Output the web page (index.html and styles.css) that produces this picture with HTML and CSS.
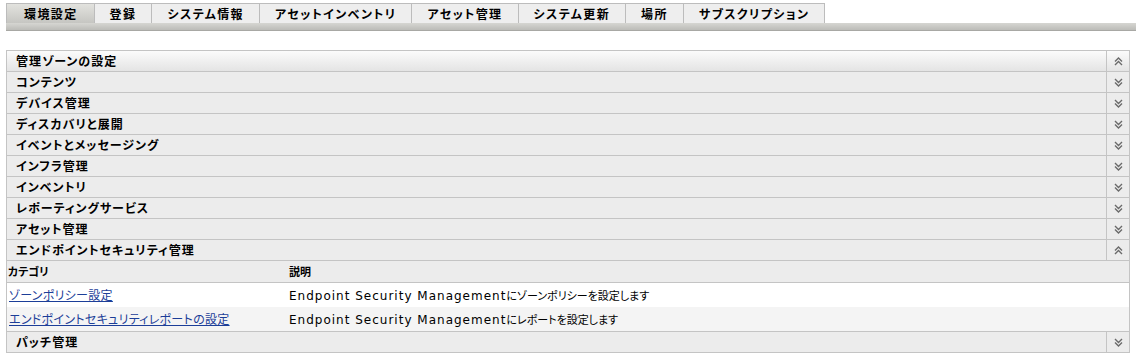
FILE: index.html
```html
<!DOCTYPE html>
<html lang="ja">
<head>
    <meta charset="UTF-8">
    <title>環境設定</title>
    <link rel="stylesheet" href="styles.css">
</head>
<body>

    <div class="tabs">
        <a class="tab active">環境設定</a>
        <a class="tab">登録</a>
        <a class="tab">システム情報</a>
        <a class="tab">アセットインベントリ</a>
        <a class="tab">アセット管理</a>
        <a class="tab">システム更新</a>
        <a class="tab">場所</a>
        <a class="tab">サブスクリプション</a>
    </div>
    <div class="tabbar"></div>

    <div class="panel">
        <div class="sect first">
            <span class="title">管理ゾーンの設定</span>
            <span class="tog"><svg width="9" height="9" viewBox="0 0 9 9"><path d="M1 4.5L4.5 1L8 4.5M1 8L4.5 4.5L8 8" fill="none" stroke="#6a6a6a" stroke-width="1.4"/></svg></span>
        </div>
        <div class="sect"><span class="title">コンテンツ</span><span class="tog down"></span></div>
        <div class="sect"><span class="title">デバイス管理</span><span class="tog down"></span></div>
        <div class="sect"><span class="title">ディスカバリと展開</span><span class="tog down"></span></div>
        <div class="sect"><span class="title">イベントとメッセージング</span><span class="tog down"></span></div>
        <div class="sect"><span class="title">インフラ管理</span><span class="tog down"></span></div>
        <div class="sect"><span class="title">インベントリ</span><span class="tog down"></span></div>
        <div class="sect"><span class="title">レポーティングサービス</span><span class="tog down"></span></div>
        <div class="sect"><span class="title">アセット管理</span><span class="tog down"></span></div>
        <div class="sect">
            <span class="title">エンドポイントセキュリティ管理</span>
            <span class="tog"><svg width="9" height="9" viewBox="0 0 9 9"><path d="M1 4.5L4.5 1L8 4.5M1 8L4.5 4.5L8 8" fill="none" stroke="#6a6a6a" stroke-width="1.4"/></svg></span>
        </div>

        <div class="list">
            <div class="lhead">カテゴリ</div>
            <div class="lhead">説明</div>
            <div class="cell"><a href="#">ゾーンポリシー設定</a></div>
            <div class="cell desc">Endpoint Security Management<span class="jp">にゾーンポリシーを設定します</span></div>
            <div class="cell alt"><a href="#">エンドポイントセキュリティレポートの設定</a></div>
            <div class="cell alt desc">Endpoint Security Management<span class="jp">にレポートを設定します</span></div>
        </div>

        <div class="sect last"><span class="title">パッチ管理</span><span class="tog down"></span></div>
    </div>

    <script>
        // 折りたたまれた項目の下向きアイコン
        document.querySelectorAll(".tog.down").forEach(function (el) {
            el.innerHTML = '<svg width="9" height="9" viewBox="0 0 9 9"><path d="M1 1L4.5 4.5L8 1M1 4.5L4.5 8L8 4.5" fill="none" stroke="#6a6a6a" stroke-width="1.4"/></svg>';
        });
    </script>

</body>
</html>
```

FILE: styles.css
```css
body {
    margin: 0;
    padding: 3px 6px 0 6px;
    background: white;
    font-family: "Noto Sans CJK JP", "DejaVu Sans", sans-serif;
    font-feature-settings: "palt";
    color: #000;
}
.tabs {
    display: flex;
}
.tab {
    display: block;
    height: 19px;
    line-height: 19px;
    padding: 0 15px;
    font-size: 12px;
    font-weight: bold;
    letter-spacing: 1.4px;
    background: #eeeeee;
    border: 1px solid #bcbcbc;
    border-bottom: none;
    border-left: none;
    color: #000;
}
.tab:first-child {
    border-left: 1px solid #bcbcbc;
}
.tab.active {
    background: linear-gradient(#e2e2de, #c6c6c2);
    padding: 0 16px 0 17px;
}
.tabbar {
    height: 7px;
    margin-right: -6px;
    background: linear-gradient(#d6d6d2, #bcbcb8);
    border-bottom: 1px solid #a8a8a4;
}
.panel {
    margin-top: 19px;
    width: 1122px;
    border: 1px solid #c4c4c4;
    border-bottom: none;
}
.sect {
    display: flex;
    height: 20px;
    background: #ececec;
    border-bottom: 1px solid #c4c4c4;
}
.sect.first {
    background: linear-gradient(#fbfbfb, #e4e4e4);
}
.title {
    flex: 1;
    padding-left: 9px;
    font-size: 12px;
    font-weight: bold;
    letter-spacing: 1px;
    line-height: 20px;
}
.tog {
    width: 22px;
    border-left: 1px solid #c4c4c4;
    display: flex;
    align-items: center;
    justify-content: center;
}
.list {
    display: grid;
    grid-template-columns: 281px 1fr;
}
.lhead {
    height: 21px;
    line-height: 21px;
    padding-left: 1px;
    font-size: 11px;
    font-weight: bold;
    background: #ececec;
    border-bottom: 1px solid #c4c4c4;
}
.cell {
    height: 24px;
    line-height: 24px;
    padding-left: 2px;
    font-size: 11px;
    background: white;
}
.cell.alt {
    background: #f4f4f4;
    border-bottom: 1px solid #c4c4c4;
}
.cell a {
    color: #1c3e98;
    text-decoration: underline;
    font-size: 12px;
    letter-spacing: 0.3px;
}
.desc {
    font-family: "DejaVu Sans", sans-serif;
    font-size: 12px;
    letter-spacing: 1px;
    padding-left: 1px;
}
.desc .jp {
    font-family: "Noto Sans CJK JP", sans-serif;
    font-size: 11px;
    letter-spacing: 0;
}
```
